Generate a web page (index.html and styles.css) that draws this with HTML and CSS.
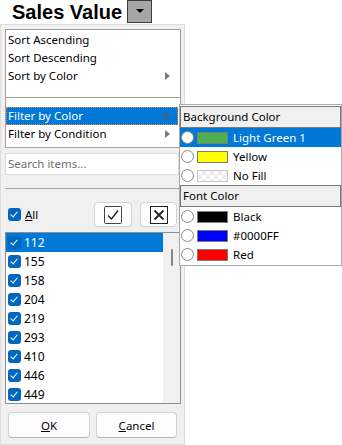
FILE: index.html
```html
<!DOCTYPE html>
<html lang="en">
<head>
    <meta charset="UTF-8">
    <meta name="viewport" content="width=device-width, initial-scale=1.0">
    <title>Sales Value Filter</title>
    <link rel="stylesheet" href="styles.css">
</head>
<body>
    <div class="header">
        <h1>Sales Value</h1>
        <button class="drop-btn"><span class="down-arrow"></span></button>
    </div>

    <div class="panel">
        <div class="menu">
            <div class="menu-item">Sort Ascending</div>
            <div class="menu-item">Sort Descending</div>
            <div class="menu-item">Sort by Color <span class="arrow"></span></div>
            <div class="menu-sep"></div>
            <div class="menu-item active">Filter by Color <span class="arrow"></span></div>
            <div class="menu-item">Filter by Condition <span class="arrow"></span></div>
        </div>

        <div class="search">Search items...</div>
        <div class="divider"></div>

        <div class="all-row">
            <span class="check"></span>
            <span class="all-label"><u>A</u>ll</span>
            <button class="icon-btn">
                <svg width="18" height="18" viewBox="0 0 18 18">
                    <rect x="0.5" y="0.5" width="17" height="17" rx="1" fill="#fff" stroke="#444"/>
                    <path d="M4 9.5 L7.5 13 L14 4.5" fill="none" stroke="#222" stroke-width="1.4"/>
                </svg>
            </button>
            <button class="icon-btn wide">
                <svg width="18" height="18" viewBox="0 0 18 18">
                    <rect x="0.5" y="0.5" width="17" height="17" fill="#fff" stroke="#222"/>
                    <path d="M4.5 4.5 L13.5 13.5 M13.5 4.5 L4.5 13.5" stroke="#222" stroke-width="1.8"/>
                </svg>
            </button>
        </div>

        <div class="list">
            <div class="rows">
                <div class="row selected"><span class="check"></span>112</div>
                <div class="row"><span class="check"></span>155</div>
                <div class="row"><span class="check"></span>158</div>
                <div class="row"><span class="check"></span>204</div>
                <div class="row"><span class="check"></span>219</div>
                <div class="row"><span class="check"></span>293</div>
                <div class="row"><span class="check"></span>410</div>
                <div class="row"><span class="check"></span>446</div>
                <div class="row"><span class="check"></span>449</div>
            </div>
            <div class="scroll-track"><div class="thumb"></div></div>
        </div>

        <div class="actions">
            <button class="btn ok"><u>O</u>K</button>
            <button class="btn cancel"><u>C</u>ancel</button>
        </div>
    </div>

    <!-- color submenu -->
    <div class="submenu">
        <div class="sub-head">Background Color</div>
        <div class="sub-row selected"><span class="radio"></span><span class="swatch green"></span>Light Green 1</div>
        <div class="sub-row"><span class="radio"></span><span class="swatch yellow"></span>Yellow</div>
        <div class="sub-row"><span class="radio"></span><span class="swatch nofill"></span>No Fill</div>
        <div class="sub-head">Font Color</div>
        <div class="sub-row"><span class="radio"></span><span class="swatch black"></span>Black</div>
        <div class="sub-row"><span class="radio"></span><span class="swatch blue"></span>#0000FF</div>
        <div class="sub-row"><span class="radio"></span><span class="swatch red"></span>Red</div>
    </div>
</body>
</html>
```

FILE: styles.css
```css
:root {
    --highlight: #0078d7;
    --check-blue: #0067c0;
    --border: #a0a0a0;
    --face: #f0f0f0;
}

* {
    box-sizing: border-box;
    margin: 0;
    padding: 0;
}

body {
    font-family: "Noto Sans", "Open Sans", sans-serif;
    font-size: 11.5px;
    color: #000;
    background: #fff;
}

button {
    font-family: inherit;
    font-size: 11.5px;
    color: #000;
}

.header {
    display: flex;
    align-items: flex-start;
    height: 24px;
    padding-left: 12px;
}

h1 {
    font-family: "Liberation Sans", Arial, sans-serif;
    font-size: 20px;
    font-weight: bold;
    line-height: 24px;
}

.drop-btn {
    width: 25px;
    height: 23px;
    margin-left: 5px;
    background: #a6a6a6;
    border: 1px solid #3c3c3c;
    display: flex;
    align-items: center;
    justify-content: center;
}

.down-arrow {
    border-top: 4px solid #000;
    border-left: 4px solid transparent;
    border-right: 4px solid transparent;
    margin-top: -1px;
}

.panel {
    width: 185px;
    height: 421px;
    background: var(--face);
    border: 1px solid #dcdcdc;
    padding: 4px 0 0 4px;
}

.menu {
    width: 176px;
    background: #fff;
    border: 1px solid var(--border);
    padding: 1px 0 4px;
}

.menu-item {
    display: flex;
    align-items: center;
    height: 18px;
    padding: 0 10px 0 2px;
    line-height: 18px;
}

.menu-item.active {
    margin-right: 2px;
    padding: 0 8px 0 1px;
    background: var(--highlight);
    color: #fff;
    border: 1px dotted #e5862a;
}

.arrow {
    margin-left: auto;
    border-left: 5px solid #7a7a7a;
    border-top: 4.5px solid transparent;
    border-bottom: 4.5px solid transparent;
}

.active .arrow {
    border-left-color: #5c5c5c;
}

.menu-sep {
    height: 1px;
    margin: 12px 0 9px;
    background: var(--border);
}

.search {
    width: 174px;
    height: 22px;
    margin-top: 5px;
    background: #fff;
    border: 1px solid #dadada;
    padding-left: 2px;
    line-height: 20px;
    color: #6e6e6e;
}

.divider {
    width: 176px;
    height: 1px;
    margin-top: 13px;
    background: var(--border);
}

.all-row {
    display: flex;
    align-items: center;
    width: 172px;
    height: 25px;
    margin-top: 13px;
    gap: 8px;
}

.check {
    position: relative;
    flex: none;
    width: 13px;
    height: 13px;
    border-radius: 3px;
    background: var(--check-blue);
}

.check::after {
    content: "";
    position: absolute;
    left: 4px;
    top: 2px;
    width: 3px;
    height: 6px;
    border: solid #fff;
    border-width: 0 1px 1px 0;
    transform: rotate(40deg);
}

.all-row .check {
    margin-left: 3px;
}

.all-label {
    margin-left: -4px;
    margin-right: auto;
}

.icon-btn {
    width: 38px;
    height: 25px;
    background: #fdfdfd;
    border: 1px solid #d4d4d4;
    border-radius: 4px;
    display: flex;
    align-items: center;
    justify-content: center;
}

.icon-btn.wide {
    width: 37px;
}

.list {
    display: flex;
    width: 176px;
    height: 172px;
    margin-top: 5px;
    background: #fff;
    border: 1px solid #8e8e8e;
}

.rows {
    width: 157px;
}

.row {
    display: flex;
    align-items: center;
    gap: 3px;
    height: 19px;
    padding-left: 2px;
    font-size: 12px;
}

.row.selected {
    background: var(--highlight);
    color: #fff;
}

.scroll-track {
    flex: 1;
    background: var(--face);
}

.thumb {
    width: 2px;
    height: 17px;
    margin: 16px 0 0 8px;
    border-radius: 1px;
    background: #868686;
}

.actions {
    display: flex;
    gap: 6px;
    margin-top: 8px;
    padding-left: 3px;
}

.btn {
    height: 26px;
    background: #fdfdfd;
    border: 1px solid #d0d0d0;
    border-bottom-color: #b5b5b5;
    border-radius: 4px;
}

.ok {
    width: 82px;
}

.cancel {
    width: 81px;
}

.submenu {
    position: absolute;
    left: 179px;
    top: 104px;
    width: 163px;
    height: 162px;
    background: #fff;
    border: 1px solid #a8a8a8;
    padding-top: 1px;
}

.sub-head {
    height: 22px;
    line-height: 20px;
    padding-left: 2px;
    background: var(--face);
    border: 1px solid #7a7a7a;
}

.sub-row {
    display: flex;
    align-items: center;
    height: 19px;
}

.sub-row.selected {
    background: var(--highlight);
    color: #fff;
}

.radio {
    width: 13px;
    height: 13px;
    margin: 0 3px 0 1px;
    border-radius: 50%;
    background: #fff;
    border: 1px solid #8a8a8a;
}

.swatch {
    width: 31px;
    height: 12px;
    margin-right: 5px;
    border: 1px solid #7d7d7d;
}

.green { background: #4caf50; }
.yellow { background: #ffff00; }
.black { background: #000; }
.blue { background: #0000ff; }
.red { background: #ff0000; }

.nofill {
    border-color: #c8c8c8;
    background: repeating-conic-gradient(#ececec 0 25%, #fff 0 50%) 0 0 / 8px 8px;
}
```
